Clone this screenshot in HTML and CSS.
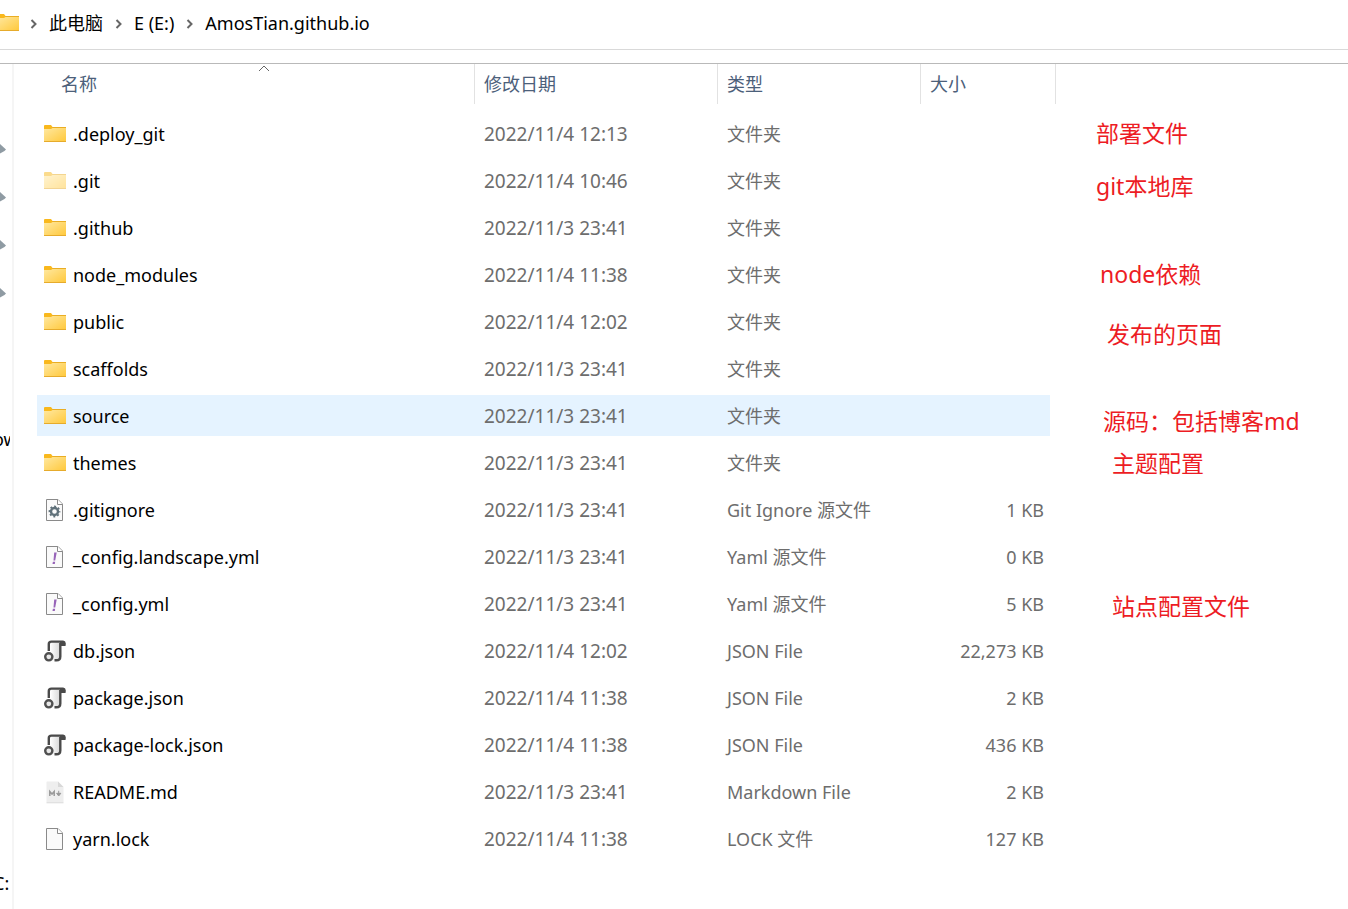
FILE: index.html
```html
<!DOCTYPE html>
<html lang="zh-CN">
<head>
<meta charset="utf-8">
<title>AmosTian.github.io</title>
<link rel="stylesheet" href="styles.css">
</head>
<body>
<svg class="defs" aria-hidden="true">
  <defs>
    <linearGradient id="gold" x1="0" y1="0" x2="1" y2="1"><stop offset="0" stop-color="#ffe8a0"/><stop offset="1" stop-color="#ffc83a"/></linearGradient>
    <linearGradient id="paper" x1="0" y1="0" x2="1" y2="0"><stop offset="0" stop-color="#ffffff"/><stop offset="1" stop-color="#d4d4d4"/></linearGradient>
    <symbol id="folder" viewBox="0 0 22 24">
      <path d="M0 4Q0 3 1 3H7L8.500 5H22V12H0Z" fill="#f9b81c"/>
      <path d="M0 7H7L8.500 6H22V20H0Z" fill="url(#gold)"/>
      <path d="M0 19.500H22" stroke="#e6ab2c" stroke-width="1"/>
      <path d="M8.500 5.500H22" stroke="#e9ad24" stroke-width="1"/>
    </symbol>
    <symbol id="page" viewBox="0 0 22 24">
      <path d="M2.500 1.500H14L18.500 6V22.500H2.500Z" fill="#fafafa" stroke="#8a8a8a"/>
      <path d="M13.500 1.500V6.500H18.500" fill="#fff" stroke="#8a8a8a"/>
    </symbol>
    <symbol id="gear" viewBox="0 0 22 24">
      <use href="#page"/>
      <circle cx="10.500" cy="13.500" r="3.500" fill="none" stroke="#5f7079" stroke-width="2.400"/>
      <circle cx="10.500" cy="13.500" r="5.100" fill="none" stroke="#5f7079" stroke-width="1.600" stroke-dasharray="2 2.005" stroke-dashoffset="1"/>
    </symbol>
    <symbol id="bang" viewBox="0 0 22 24">
      <use href="#page"/>
      <path d="M10.200 7.500H12.700L11.200 15.500H9.500Z M8.900 16.700H11.200L10.800 19H8.500Z" fill="#9764b8"/>
    </symbol>
    <symbol id="json" viewBox="0 0 22 24">
      <path d="M6 2.500H17V17Q17 22 12 21.500L6 21Z" fill="url(#paper)"/>
      <path d="M4.800 12V5Q4.800 2.600 7.500 2.600H19Q21 3 20.500 5.700H16.500" fill="none" stroke="#4a4a4a" stroke-width="2.400"/>
      <path d="M16.300 4V17.500Q16.300 21.300 12.500 21.300H10.500" fill="none" stroke="#4a4a4a" stroke-width="2.400"/>
      <path d="M16 2.500H20.500V5.500H16Z" fill="#4a4a4a"/>
      <circle cx="4.800" cy="17.800" r="3.600" fill="#e8e8e8" stroke="#505050" stroke-width="2.400"/>
    </symbol>
    <symbol id="markdown" viewBox="0 0 22 24">
      <path d="M3 1.500H14L19.500 7V22Q19.500 23 18.500 23H3.500Q2.500 23 2.500 22V2Z" fill="#eeeeee"/>
      <path d="M2.500 22.800H19.500" stroke="#dcdcdc"/>
      <path d="M14 1.500V7H19.500Z" fill="#d8d8d8"/>
      <path d="M5.800 16V11.500L8 14L10.200 11.500V16" fill="none" stroke="#999" stroke-width="1.500"/>
      <path d="M14.700 10.800V14M12.600 13.300H16.800L14.700 16Z" fill="#999" stroke="#999" stroke-width="1"/>
    </symbol>
    <symbol id="chevron" viewBox="0 0 8 10"><path d="M1.500 1L5.500 5L1.500 9" fill="none" stroke="#666" stroke-width="2"/></symbol>
    <symbol id="pin" viewBox="0 0 6 12"><path d="M0 1L6 6.500L4.500 8L0 10.500Z" fill="#8f9ba3"/></symbol>
  </defs>
</svg>

<nav class="breadcrumb" aria-label="路径">
  <svg class="root-icon"><use href="#folder"/></svg>
  <svg class="chevron"><use href="#chevron"/></svg>
  <a href="#">此电脑</a>
  <svg class="chevron"><use href="#chevron"/></svg>
  <a href="#">E (E:)</a>
  <svg class="chevron"><use href="#chevron"/></svg>
  <a href="#">AmosTian.github.io</a>
</nav>

<div class="explorer">
  <aside class="tree">
    <svg class="pin"><use href="#pin"/></svg>
    <svg class="pin"><use href="#pin"/></svg>
    <svg class="pin"><use href="#pin"/></svg>
    <svg class="pin"><use href="#pin"/></svg>
    <div class="tree-item"><span>ow</span></div>
    <div class="tree-item drive"><span>C:</span></div>
  </aside>
  <main class="content">
    <table class="files">
      <colgroup><col class="col-name"><col class="col-date"><col class="col-type"><col class="col-size"></colgroup>
      <thead>
        <tr>
          <th aria-sort="ascending"><button class="sort name-sort" type="button">名称<svg class="caret" viewBox="0 0 12 7"><path d="M1 6L6 1L11 6" fill="none" stroke="#666"/></svg></button></th>
          <th><button class="sort" type="button">修改日期</button></th>
          <th><button class="sort" type="button">类型</button></th>
          <th><button class="sort" type="button">大小</button></th>
        </tr>
      </thead>
      <tbody>
        <tr><td><div class="name"><svg><use href="#folder"/></svg>.deploy_git</div></td><td>2022/11/4 12:13</td><td>文件夹</td><td></td></tr>
        <tr><td><div class="name hidden-item"><svg><use href="#folder"/></svg>.git</div></td><td>2022/11/4 10:46</td><td>文件夹</td><td></td></tr>
        <tr><td><div class="name"><svg><use href="#folder"/></svg>.github</div></td><td>2022/11/3 23:41</td><td>文件夹</td><td></td></tr>
        <tr><td><div class="name"><svg><use href="#folder"/></svg>node_modules</div></td><td>2022/11/4 11:38</td><td>文件夹</td><td></td></tr>
        <tr><td><div class="name"><svg><use href="#folder"/></svg>public</div></td><td>2022/11/4 12:02</td><td>文件夹</td><td></td></tr>
        <tr><td><div class="name"><svg><use href="#folder"/></svg>scaffolds</div></td><td>2022/11/3 23:41</td><td>文件夹</td><td></td></tr>
        <tr class="active"><td><div class="name"><svg><use href="#folder"/></svg>source</div></td><td>2022/11/3 23:41</td><td>文件夹</td><td></td></tr>
        <tr><td><div class="name"><svg><use href="#folder"/></svg>themes</div></td><td>2022/11/3 23:41</td><td>文件夹</td><td></td></tr>
        <tr><td><div class="name"><svg><use href="#gear"/></svg>.gitignore</div></td><td>2022/11/3 23:41</td><td>Git Ignore 源文件</td><td>1 KB</td></tr>
        <tr><td><div class="name"><svg><use href="#bang"/></svg>_config.landscape.yml</div></td><td>2022/11/3 23:41</td><td>Yaml 源文件</td><td>0 KB</td></tr>
        <tr><td><div class="name"><svg><use href="#bang"/></svg>_config.yml</div></td><td>2022/11/3 23:41</td><td>Yaml 源文件</td><td>5 KB</td></tr>
        <tr><td><div class="name"><svg><use href="#json"/></svg>db.json</div></td><td>2022/11/4 12:02</td><td>JSON File</td><td>22,273 KB</td></tr>
        <tr><td><div class="name"><svg><use href="#json"/></svg>package.json</div></td><td>2022/11/4 11:38</td><td>JSON File</td><td>2 KB</td></tr>
        <tr><td><div class="name"><svg><use href="#json"/></svg>package-lock.json</div></td><td>2022/11/4 11:38</td><td>JSON File</td><td>436 KB</td></tr>
        <tr><td><div class="name"><svg><use href="#markdown"/></svg>README.md</div></td><td>2022/11/3 23:41</td><td>Markdown File</td><td>2 KB</td></tr>
        <tr><td><div class="name"><svg><use href="#page"/></svg>yarn.lock</div></td><td>2022/11/4 11:38</td><td>LOCK 文件</td><td>127 KB</td></tr>
      </tbody>
    </table>
    <div class="notes">
      <span class="note note-deploy">部署文件</span>
      <span class="note note-git">git本地库</span>
      <span class="note note-node">node依赖</span>
      <span class="note note-public">发布的页面</span>
      <span class="note note-source">源码：包括博客md</span>
      <span class="note note-theme">主题配置</span>
      <span class="note note-site">站点配置文件</span>
    </div>
  </main>
</div>
</body>
</html>
```
FILE: styles.css
```css
* { box-sizing: border-box; }
body {
  margin: 0;
  background: #fff;
  color: #000;
  font: 18px/24px "Noto Sans", "Noto Sans CJK SC", sans-serif;
}
.defs { position: absolute; width: 0; height: 0; }

.breadcrumb {
  display: flex;
  align-items: center;
  height: 50px;
  padding-bottom: 4px;
  border-bottom: 1px solid #d9d9d9;
}
.breadcrumb a { color: #000; text-decoration: none; white-space: nowrap; }
.root-icon { width: 22px; height: 24px; margin: 0 -1px 0 -3px; }
.chevron { width: 8px; height: 10px; margin: 2px 11px 0 12px; }

.explorer {
  display: flex;
  margin-top: 13px;
  border-top: 1px solid #b9b9b9;
  min-height: calc(100vh - 63px);
}
.tree {
  flex: none;
  width: 14px;
  padding-top: 61px;
  border-right: 2px solid #f5f5f5;
}
.pin { display: block; width: 6px; height: 12px; margin: 18px 0 36px; }
.pin + .pin { margin-top: 0; }
.tree-item { width: 10px; margin-top: 128px; overflow: hidden; }
.tree-item span { margin-left: -7px; }
.tree-item.drive { margin-top: 420px; }

.content { position: relative; flex: 1; padding-left: 23px; }
.files { table-layout: fixed; width: 1019px; border-collapse: separate; border-spacing: 0; }
.col-name { width: 438px; }
.col-date { width: 243px; }
.col-type { width: 203px; }
.col-size { width: 135px; }
th { height: 46px; padding: 0; vertical-align: top; }
.sort {
  display: block;
  position: relative;
  width: 100%;
  height: 40px;
  padding: 0 9px;
  border: 0;
  border-right: 1px solid #e2e2e2;
  background: none;
  color: #4c607a;
  font: inherit;
  font-weight: 400;
  text-align: left;
}
.name-sort { padding-left: 24px; }
.caret { position: absolute; top: 1px; left: 221px; width: 12px; height: 7px; }
td {
  height: 47px;
  padding: 0 0 0 9px;
  border: 0 solid transparent;
  border-width: 3px 0;
  background-clip: padding-box;
  color: #6d6d6d;
  white-space: nowrap;
}
td:nth-child(2) { font-size: 19px; }
td:first-child { padding-left: 7px; color: #000; }
td:last-child { padding-right: 6px; border-right-width: 6px; text-align: right; }
.active td { background-color: #e5f3ff; }
.active td:first-child { border-radius: 3px 0 0 3px; }
.name { display: flex; align-items: center; gap: 7px; }
.name svg { width: 22px; height: 24px; }
.hidden-item svg { opacity: 0.5; }

.note {
  position: absolute;
  color: #ed1c24;
  font-size: 23px;
  line-height: 30px;
  white-space: nowrap;
}
.note-deploy { left: 1082px; top: 54px; }
.note-git { left: 1082px; top: 107px; }
.note-node { left: 1086px; top: 195px; }
.note-public { left: 1093px; top: 255px; }
.note-source { left: 1089px; top: 342px; }
.note-theme { left: 1098px; top: 384px; }
.note-site { left: 1098px; top: 527px; }
```
